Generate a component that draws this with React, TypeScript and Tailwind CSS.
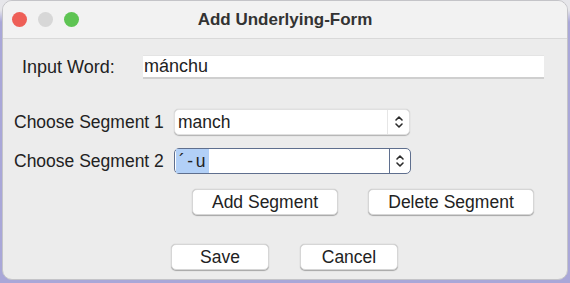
const Chevrons = () => (
  <svg width="10" height="14" viewBox="0 0 10 14" fill="none" stroke="#2b2b2b" strokeWidth="1.6" strokeLinecap="round" strokeLinejoin="round">
    <path d="M2 5 L5 2 L8 5" />
    <path d="M2 9 L5 12 L8 9" />
  </svg>
);

const Combo = ({ value, focused }: { value: string; focused?: boolean }) => (
  <div
    className={
      focused
        ? 'flex h-[26px] w-[237px] items-stretch rounded-[5px] border-[1.5px] border-[#5f6f8e] bg-white'
        : 'flex h-[26px] w-[236px] items-stretch rounded-[5px] border border-[#e0e0e0] bg-white shadow-[0_0.5px_1px_rgba(0,0,0,0.25)]'
    }
  >
    <div className="flex flex-1 items-center pl-[1px]">
      {focused ? (
        <span className="flex h-full items-center bg-[#b2d0f7] pl-[3px] pr-[1px] tracking-[2.5px]">{value}</span>
      ) : (
        <span className="pl-[2px]">{value}</span>
      )}
    </div>
    <div className={focused ? 'flex w-[21px] items-center justify-center border-l-[1.5px] border-[#5f6f8e]' : 'flex w-[22px] items-center justify-center border-l border-[#e6e6e6]'}>
      <Chevrons />
    </div>
  </div>
);

const Btn = ({ label, w }: { label: string; w: string }) => (
  <button className={`${w} flex h-[26px] items-center justify-center rounded-[5px] border border-[#d6d6d6] bg-white text-[17.5px] text-[#222] shadow-[0_0.5px_1px_rgba(0,0,0,0.3)]`}>
    {label}
  </button>
);

export default function App() {
  return (
    <div
      className="h-[283px] w-[570px] bg-[linear-gradient(to_bottom,#e6e6ea_0px,#e6e6ea_10px,#a9a7d8_22px)] text-[17.5px] text-[#222]"
      style={{ fontFamily: '"Liberation Sans", Arial, sans-serif' }}
    >
      <div className="ml-[2px] flex h-[280px] w-[566px] flex-col overflow-hidden rounded-[10px] border border-[#c4c4c8] bg-[#ececec]">
        <div className="relative flex h-[38px] shrink-0 items-center border-b border-[#d9d9d9] bg-[#f2f2f2]">
          <div className="flex items-center gap-[11px] pl-[9px]">
            <span className="h-[15px] w-[15px] rounded-full bg-[#ee5f57]" />
            <span className="h-[15px] w-[15px] rounded-full bg-[#d7d7d7]" />
            <span className="h-[15px] w-[15px] rounded-full bg-[#5ec453]" />
          </div>
          <div className="absolute inset-0 flex items-center justify-center text-[17px] font-bold text-[#333]">
            Add Underlying-Form
          </div>
        </div>

        <div className="flex flex-col">
          <div className="mt-[16px] flex h-[24px] items-center pl-[19px]">
            <span className="w-[121px] text-[18px]">Input Word:</span>
            <div className="flex h-[24px] w-[401px] items-center border-t border-b-2 border-t-[#e4e4e4] border-b-[#cfcfcf] bg-white pl-[1px] text-[18px]">
              mánchu
            </div>
          </div>

          <div className="mt-[30px] flex h-[26px] items-center pl-[11px]">
            <span className="w-[160px]">Choose Segment 1</span>
            <Combo value="manch" />
          </div>

          <div className="mt-[13px] flex h-[26px] items-center pl-[11px]">
            <span className="w-[160px]">Choose Segment 2</span>
            <Combo value="´-u" focused />
          </div>

          <div className="mt-[15px] flex gap-[30px] pl-[189px]">
            <Btn label="Add Segment" w="w-[146px]" />
            <Btn label="Delete Segment" w="w-[166px]" />
          </div>

          <div className="mt-[29px] flex gap-[31px] pl-[168px]">
            <Btn label="Save" w="w-[98px]" />
            <Btn label="Cancel" w="w-[98px]" />
          </div>
        </div>
      </div>
    </div>
  );
}
